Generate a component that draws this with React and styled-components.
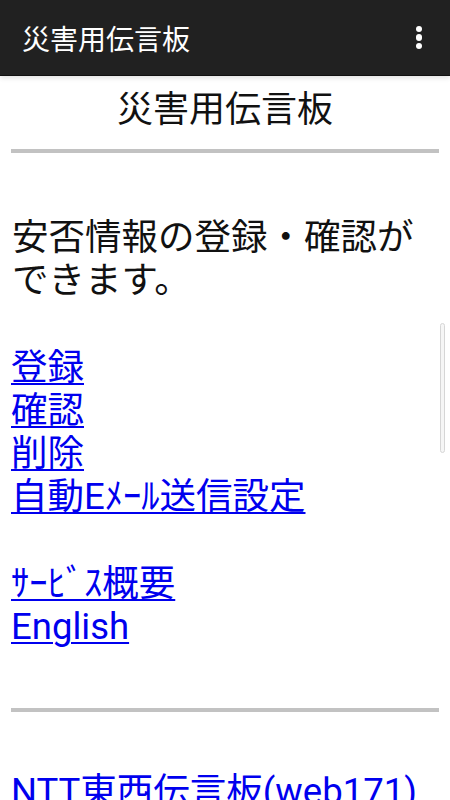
import React from "react";
import styled, { createGlobalStyle } from "styled-components";

const GlobalStyle = createGlobalStyle`
  html, body {
    margin: 0;
    padding: 0;
    background: #fff;
  }
  body {
    font-family: Roboto, "Noto Sans CJK JP", sans-serif;
    overflow: hidden;
  }
`;

const Screen = styled.div`
  position: relative;
  width: 450px;
  height: 800px;
  overflow: hidden;
  background: #fff;
`;

const AppBar = styled.header`
  position: relative;
  height: 76px;
  background: #212121;
  border-bottom: 1px solid #111;
  display: flex;
  align-items: center;
  justify-content: space-between;
  padding: 0 14px 0 22px;
  box-sizing: border-box;
  z-index: 1;
  box-shadow: 0 2px 5px rgba(0, 0, 0, 0.12);
`;

const AppTitle = styled.h1`
  margin: 0;
  font-size: 28px;
  font-weight: 400;
  color: #fff;
`;

const MenuButton = styled.button`
  width: 34px;
  height: 44px;
  border: 0;
  padding: 0;
  background: none;
  display: flex;
  flex-direction: column;
  align-items: center;
  justify-content: center;
  gap: 2px;
`;

const Dot = styled.span`
  width: 6.5px;
  height: 6.5px;
  border-radius: 50%;
  background: #fff;
`;

const Page = styled.main`
  padding: 0 11px;
  font-size: 36.5px;
  line-height: 43.3px;
  color: #111;
`;

const Heading = styled.div`
  text-align: center;
  height: 73px;
  line-height: 68px;
  font-size: 36px;
`;

const Rule = styled.hr`
  margin: 0;
  height: 4px;
  border: 0;
  background: #c2c2c2;
  margin-top: ${(p) => p.$before || 0}px;
`;

const Lead = styled.p`
  margin: 63px 0 0 1px;
`;

const LinkList = styled.nav`
  display: flex;
  flex-direction: column;
  align-items: flex-start;
  margin-top: ${(p) => p.$gap}px;
`;

const PageLink = styled.a`
  color: #0000ee;
  text-decoration: underline;
  text-decoration-thickness: 2px;
  text-underline-offset: 3px;
  white-space: nowrap;
`;

const ScrollThumb = styled.div`
  position: absolute;
  right: 5px;
  top: 323px;
  width: 3px;
  height: 128px;
  border: 1px solid #d6d6d6;
  border-radius: 3px;
  background: #f6f6f6;
`;

const mainLinks = ["登録", "確認", "削除", "自動Eﾒｰﾙ送信設定"];
const infoLinks = ["ｻｰﾋﾞｽ概要", "English"];

export default function App() {
  return (
    <Screen>
      <GlobalStyle />
      <AppBar>
        <AppTitle>災害用伝言板</AppTitle>
        <MenuButton aria-label="menu">
          <Dot />
          <Dot />
          <Dot />
        </MenuButton>
      </AppBar>
      <Page>
        <Heading>災害用伝言板</Heading>
        <Rule />
        <Lead>
          安否情報の登録・確認が
          <br />
          できます。
        </Lead>
        <LinkList $gap={43}>
          {mainLinks.map((label) => (
            <PageLink key={label} href="#">
              {label}
            </PageLink>
          ))}
        </LinkList>
        <LinkList $gap={43}>
          {infoLinks.map((label) => (
            <PageLink key={label} href="#">
              {label}
            </PageLink>
          ))}
        </LinkList>
        <Rule $before={60} />
        <LinkList $gap={58}>
          <PageLink href="#">NTT東西伝言板(web171)</PageLink>
        </LinkList>
      </Page>
      <ScrollThumb />
    </Screen>
  );
}
